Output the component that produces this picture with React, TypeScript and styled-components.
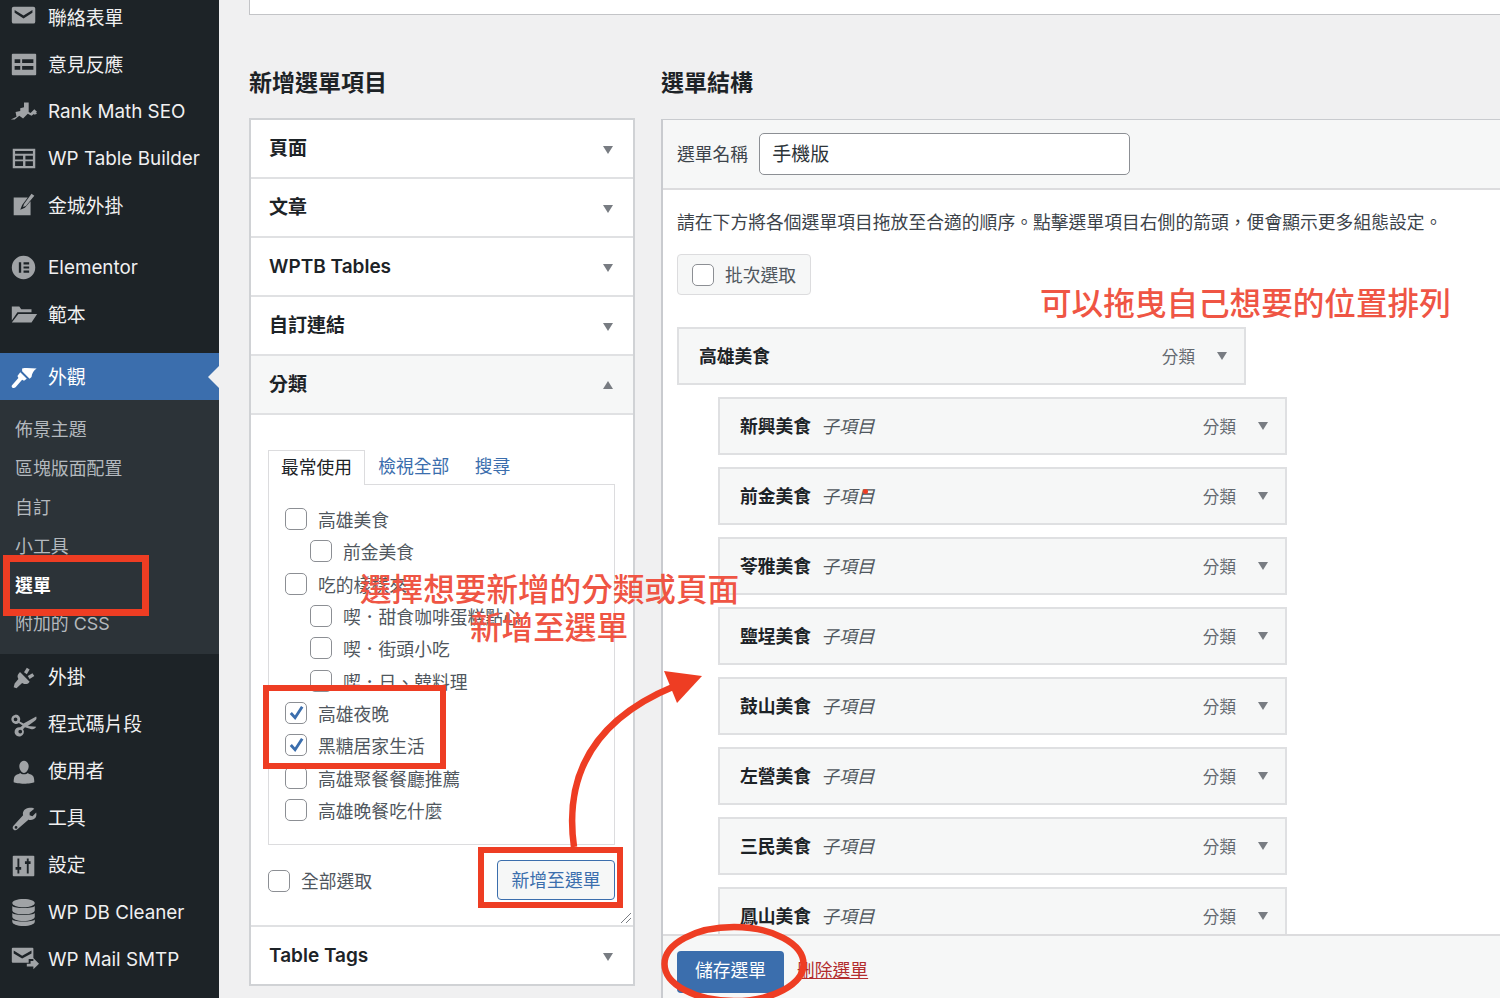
import React from "react";
import styled, { createGlobalStyle } from "styled-components";

const Global = createGlobalStyle`
  html, body { margin: 0; padding: 0; background: #f0f0f1; overflow: hidden; }
  * { box-sizing: border-box; }
`;
const CJK = `"Inter", "Noto Sans CJK TC", sans-serif`;

const Page = styled.div`
  position: relative; display: flex; width: 1500px; height: 998px; overflow: hidden;
  background: #f0f0f1; font-family: ${CJK}; color: #3c434a;
`;
const Lbl = styled.span<{ $lift?: number }>`
  display: block; padding-top: ${p => p.$lift ?? 3}px;
`;
const Sidebar = styled.nav`
  width: 219px; flex: none; height: 998px; background: #1d2327; overflow: hidden;
  display: flex; flex-direction: column;
`;
const MenuTop = styled.div`margin-top: -7px;`;
const Spacer = styled.div<{ $h: number }>`height: ${p => p.$h}px; flex: none;`;
const MenuItem = styled.div<{ $active?: boolean }>`
  position: relative; display: flex; align-items: center; height: 47px; flex: none;
  padding-left: 9px; gap: 9px; font-size: 18.85px; line-height: 24px;
  color: ${p => (p.$active ? "#ffffff" : "#f0f0f1")};
  background: ${p => (p.$active ? "#3b6ead" : "transparent")};
  ${p => p.$active && `&::after { content: ""; position: absolute; right: 0; top: 13px;
    border: 11px solid transparent; border-right-color: #f0f0f1; border-left-width: 0; }`}
`;
const MenuIcon = styled.svg<{ $active?: boolean }>`
  width: 30px; height: 30px; flex: none; fill: ${p => (p.$active ? "#fff" : "#a0a3a6")};
`;
const SubMenu = styled.div`
  background: #2c3338; padding: 9.5px 0 10.5px; flex: none;
`;
const SubItem = styled.div<{ $current?: boolean }>`
  height: 39px; display: flex; align-items: center; padding-left: 15px; font-size: 17.9px; line-height: 22px;
  color: ${p => (p.$current ? "#fff" : "#b4b9be")}; font-weight: ${p => (p.$current ? 700 : 400)};
`;

const Main = styled.main`
  flex: 1; min-width: 0; height: 998px; padding-left: 30px; display: flex; flex-direction: column;
`;
const TopBox = styled.div`
  height: 15px; flex: none; background: #fff; border: 1px solid #c3c4c7; border-top: 0; border-right: 0;
`;
const Columns = styled.div`
  display: flex; gap: 26px; margin-top: 52px; flex: 1; min-height: 0;
`;
const LeftCol = styled.section`width: 386px; flex: none;`;
const RightCol = styled.section`flex: 1; min-width: 0; display: flex; flex-direction: column;`;
const Heading = styled.h2`
  margin: 0 0 20px; height: 32px; line-height: 32px; font-size: 23px; font-weight: 600; color: #1d2327;
`;
const LeftHeading = styled(Heading)`margin-bottom: 19px;`;
const Accordion = styled.div`
  background: #fff; border: 2px solid #d0d2d5; width: 386px;
`;
const AccHead = styled.div<{ $open?: boolean }>`
  height: 59px; display: flex; align-items: center; justify-content: space-between;
  padding: 0 20px 0 18px; font-size: 19px; line-height: 24px; font-weight: 600; color: #1d2327;
  background: ${p => (p.$open ? "#f6f7f7" : "#fff")};
  border-bottom: 2px solid #e0e1e3;
`;
const AccHeadLast = styled(AccHead)`border-bottom: 0; height: 57px;`;
const Arrow = styled.i<{ $up?: boolean }>`
  display: block; width: 0; height: 0; flex: none;
  border-left: 5.5px solid transparent; border-right: 5.5px solid transparent;
  ${p => (p.$up ? "border-bottom: 8px solid #787c82;" : "border-top: 8px solid #787c82;")}
`;
const AccArrow = styled(Arrow)`margin-top: ${p => (p.$up ? 0 : 2)}px;`;
const ItemArrow = styled(Arrow)`margin-bottom: 2px;`;
const AccBody = styled.div`
  position: relative; height: 512px; padding: 35px 18px 0 17px; border-bottom: 2px solid #e0e1e3;
`;
const Tabs = styled.div`display: flex; align-items: flex-end; height: 34px; font-size: 17.8px; line-height: 22px;`;
const TabActive = styled.div`
  height: 35px; padding: 0 12px; display: flex; align-items: center; background: #fff; color: #1d2327;
  border: 1px solid #dcdcde; border-bottom: 0; margin-bottom: -1px; position: relative;
`;
const TabLink = styled.a`
  height: 34px; display: flex; align-items: center; color: #3b6ead; margin-left: 13px; margin-right: 12.5px;
`;
const CheckList = styled.div`
  height: 361px; border: 1px solid #dcdcde; padding: 18px 0 0 16px; font-size: 17.8px; line-height: 22px;
`;
const Row = styled.label<{ $child?: boolean }>`
  display: flex; align-items: center; height: 32.3px; gap: 11px; color: #50575e;
  padding-left: ${p => (p.$child ? 25 : 0)}px; white-space: nowrap;
`;
const Box = styled.span`
  width: 22px; height: 22px; flex: none; display: block; background: #fff; border: 1.5px solid #8c8f94; border-radius: 5px;
  position: relative;
  svg { position: absolute; left: 1px; top: 0; width: 19px; height: 19px; fill: none; stroke: #3b6ead; stroke-width: 3; }
`;
const SelectRow = styled.div`
  display: flex; align-items: center; justify-content: space-between; margin-top: 15px; height: 40px;
`;
const SelectAll = styled.label`
  display: flex; align-items: center; gap: 11px; font-size: 17.8px; line-height: 22px; color: #50575e; margin-top: 1px;
`;
const AddBtn = styled.button`
  width: 118px; height: 40px; font: inherit; font-size: 17.8px; line-height: 22px; color: #3b6ead; background: #f6f7f7;
  border: 1.5px solid #3b6ead; border-radius: 4px; padding: 2px 0 0;
`;
const Resize = styled.svg`
  position: absolute; right: 1px; bottom: 1px; width: 12px; height: 12px; stroke: #787c82; fill: none; stroke-width: 1;
`;

const Panel = styled.div`
  flex: 1; min-height: 0; display: flex; flex-direction: column; background: #fff; border-left: 2px solid #c9cbcf; border-top: 1.5px solid #c9cbcf;
`;
const NameBar = styled.div`
  height: 70px; flex: none; background: #f6f7f7; border-bottom: 2px solid #dcdcde;
  display: flex; align-items: center; padding-left: 14px; gap: 11px; font-size: 17.8px; line-height: 22px;
`;
const NameInput = styled.div`
  width: 371px; height: 42px; background: #fff; border: 1.5px solid #8c8f94; border-radius: 5px;
  display: flex; align-items: center; padding: 2px 0 0 12px; font-size: 19px; color: #2c3338;
`;
const PanelBody = styled.div`
  flex: 1; min-height: 0; overflow: hidden; padding: 19px 0 0 14px;
`;
const Help = styled.p`
  margin: 0; height: 27px; line-height: 27px; font-size: 17.75px; letter-spacing: 0.05px; color: #3c434a; white-space: nowrap;
`;
const BulkBtn = styled.div`
  display: flex; align-items: center; gap: 11px; margin-top: 18px; width: 134px; height: 41px; line-height: 22px;
  background: #f6f7f7; border: 1.5px solid #dcdcde; border-radius: 4px; padding-left: 14px; font-size: 17.8px; color: #50575e;
`;
const ItemList = styled.div`display: flex; flex-direction: column; gap: 12px; margin-top: 32px;`;
const Item = styled.div<{ $child?: boolean }>`
  position: relative; width: 569px; height: 58px; flex: none; margin-left: ${p => (p.$child ? 41 : 0)}px;
  background: #f6f7f7; border: 2px solid #dfe0e2; display: flex; align-items: center;
  padding: 2px 17px 0 20px; font-size: 17.8px; line-height: 22px;
`;
const ItemTitle = styled.strong`font-weight: 600; color: #1d2327;`;
const ItemSub = styled.em`margin-left: 10px; color: #50575e; font-style: italic;`;
const ItemType = styled.span`margin-left: auto; margin-right: 22px; font-size: 16.6px; color: #646970;`;
const Dot = styled.i`
  position: absolute; left: 143px; top: 20px; width: 5px; height: 5px; border-radius: 50%; background: #ee3d23;
`;
const Footer = styled.div`
  height: 64px; flex: none; background: #f6f7f7; border-top: 2px solid #dcdcde;
  display: flex; align-items: center; padding: 9px 0 0 14px; gap: 13px; line-height: 22px;
`;
const SaveBtn = styled.button`
  width: 107px; height: 42px; font: inherit; font-size: 17.8px; color: #fff; background: #3b6ead;
  border: 0; border-radius: 4px; padding: 0 0 2px;
`;
const DeleteLink = styled.a`font-size: 17.8px; color: #b32d2e; text-decoration: underline; margin-top: -2px;`;

const Overlay = styled.svg`position: absolute; inset: 0; width: 1500px; height: 998px; pointer-events: none;`;
const Note = styled.span<{ $x: number; $y: number }>`
  position: absolute; left: ${p => p.$x}px; top: ${p => p.$y}px; font-size: 31.6px; line-height: 40px;
  font-weight: 500; color: #ef5544; white-space: nowrap;
`;

const icons: Record<string, React.ReactNode> = {
  mail: <path fillRule="evenodd" d="M5 4h21a2 2 0 0 1 2 2v14a2 2 0 0 1-2 2H5a2 2 0 0 1-2-2V6a2 2 0 0 1 2-2zm1 3.500v3l9.500 6 9.500-6v-3l-9.500 6z" />,
  form: <path fillRule="evenodd" d="M4 4h24a1 1 0 0 1 1 1v21a1 1 0 0 1-1 1H4a1 1 0 0 1-1-1V5a1 1 0 0 1 1-1zm2 6v4h6v-4zm8 0v4h12v-4zM6 17v4h6v-4zm8 0v4h12v-4z" />,
  rank: <path d="M2 24l6-3-1-5 5-1v-3l4-1V6h5v10l2 1 4-4 3 3-2 1-4 3-4-2-5 5-4-3-5 4zm24-9l4 3-3 1z" />,
  table: <path fillRule="evenodd" d="M4 5h24v21H4zm2.500 2.500v3h19v-3zm0 5v4h8.500v-4zm11 0v4h8v-4zM6.500 18.500v5h8.500v-5zm11 0v5h8v-5z" />,
  edit: <path d="M5 7h15l-6 8-2 5 5-2 6-7v15H5zM24 3l3 2-9 11-3 1 1-3z" />,
  elementor: <path fillRule="evenodd" d="M15.500 3a12.500 12.500 0 1 1 0 25 12.500 12.500 0 0 1 0-25zm-5 7v11h2.500V10zm5 0v2.200h6V10zm0 4.400v2.200h6v-2.200zm0 4.400V21h6v-2.200z" />,
  folder: <path d="M3 7h8l2 3h11v3H9l-6 9zM10 15h20l-6 9H3z" />,
  brush: <path d="M14 7c5-1 10 0 15.500 0-3 2-5 5-5.500 9l-2 2-8-8zM12 11l7 7-3 2-2-1-7 8c-2 2-5 0-4-2l7-8-1-2z" />,
  plugin: <path d="M19 5l3 2-3 5-3-2zM25 11l2 3-5 3-2-3zM12 10l10 10c-2 3-5 3-7 2l-1-.5-6 5.500-3-1 1-4 4-5-.5-1c-1-2 0-4 2-6z" />,
  scissors: <path fillRule="evenodd" d="M7 5a5 5 0 0 1 4.500 7.200l4 2.300L29 7c1 2 0 4-2 5l-7 5 9 1c-1 2-3 3-5 2.500l-7-2-2 2a5 5 0 1 1-3-2l2.500-2-4-2.500A5 5 0 1 1 7 5zm0 3a2 2 0 1 0 0 4 2 2 0 0 0 0-4zm5 13a2 2 0 1 0 0 4 2 2 0 0 0 0-4z" />,
  user: <path d="M16 4c3 0 5 3 5 6s-2 7-5 7-5-4-5-7 2-6 5-6zM5 27c0-5 1-7 3-8 2-1 3-1 4-2 1 2 7 2 8 0 1 1 2 1 4 2s3 3 3 8c-3 2-19 2-22 0z" />,
  wrench: <path d="M27 5l-5 4v3l3 1 4-4c1 4-1 8-6 8-1 0-2 0-2-.5L9 27c-3 3-7-1-4-4l10-11c-1-4 2-8 7-8 2 0 4 0 5 1zM7.500 23.500a1.500 1.500 0 1 0 0 3 1.500 1.500 0 0 0 0-3z" />,
  sliders: <path fillRule="evenodd" d="M5 5h21a1 1 0 0 1 1 1v20a1 1 0 0 1-1 1H5a1 1 0 0 1-1-1V6a1 1 0 0 1 1-1zm4 3v9H7v3h2v4h2v-4h2v-3h-2V8zm10 0v3h-2v3h2v10h2V14h2v-3h-2V8z" />,
  db: <path d="M15.500 1c7 0 12 2 12 4.500S22.500 10 15.500 10s-12-2-12-4.500S8.500 1 15.500 1zM3.500 8.500C6 11.500 25 11.500 27.500 8.500V13c0 2.500-5 4.500-12 4.500S3.500 15.500 3.500 13zM3.500 16c2.500 3 21.500 3 24 0v4c0 2.500-5 4.500-12 4.500s-12-2-12-4.500zM3.500 23c2.500 3 21.500 3 24 0v2.500c0 2.500-5 4.500-12 4.500s-12-2-12-4.500z" />,
  smtp: <path fillRule="evenodd" d="M4 3h21a1 1 0 0 1 1 1v11h-5v4H4a1 1 0 0 1-1-1V4a1 1 0 0 1 1-1zm1 3v3l9 5.500L24 9V6l-10 5.500zM23 17h3v-3l6 6-6 6v-3h-7v-3h4z" />,
};

const Icon = ({ name, active }: { name: string; active?: boolean }) => (
  <MenuIcon viewBox="0 0 32 30" $active={active}>{icons[name]}</MenuIcon>
);
const NavRow = ({ icon, label, active, lift }: { icon: string; label: string; active?: boolean; lift?: number }) => (
  <MenuItem $active={active}><Icon name={icon} active={active} /><Lbl $lift={lift}>{label}</Lbl></MenuItem>
);

const Check = ({ checked }: { checked?: boolean }) => (
  <Box>{checked && <svg viewBox="0 0 20 20"><path d="M4 10.500l4.500 5L16 4" /></svg>}</Box>
);

const cats: [string, boolean?, boolean?][] = [
  ["高雄美食"], ["前金美食", true], ["吃的樣樣來"], ["喫．甜食咖啡蛋糕點心", true], ["喫．街頭小吃", true], ["喫．日、韓料理", true],
  ["高雄夜晚", false, true], ["黑糖居家生活", false, true], ["高雄聚餐餐廳推薦"], ["高雄晚餐吃什麼"],
];
const children = ["新興美食", "前金美食", "苓雅美食", "鹽埕美食", "鼓山美食", "左營美食", "三民美食", "鳳山美食"];

export default function App() {
  return (
    <Page>
      <Global />
      <Sidebar>
        <MenuTop />
        <NavRow icon="mail" label="聯絡表單" lift={5} />
        <NavRow icon="form" label="意見反應" lift={5} />
        <NavRow icon="rank" label="Rank Math SEO" />
        <NavRow icon="table" label="WP Table Builder" />
        <NavRow icon="edit" label="金城外掛" lift={5} />
        <Spacer $h={15} />
        <NavRow icon="elementor" label="Elementor" />
        <NavRow icon="folder" label="範本" lift={5} />
        <Spacer $h={15.5} />
        <NavRow icon="brush" label="外觀" active />
        <SubMenu>
          <SubItem><Lbl>佈景主題</Lbl></SubItem>
          <SubItem><Lbl>區塊版面配置</Lbl></SubItem>
          <SubItem><Lbl>自訂</Lbl></SubItem>
          <SubItem><Lbl>小工具</Lbl></SubItem>
          <SubItem $current><Lbl>選單</Lbl></SubItem>
          <SubItem><Lbl $lift={1}>附加的 CSS</Lbl></SubItem>
        </SubMenu>
        <NavRow icon="plugin" label="外掛" lift={2} />
        <NavRow icon="scissors" label="程式碼片段" lift={1} />
        <NavRow icon="user" label="使用者" lift={1} />
        <NavRow icon="wrench" label="工具" lift={1} />
        <NavRow icon="sliders" label="設定" lift={1} />
        <NavRow icon="db" label="WP DB Cleaner" lift={1} />
        <NavRow icon="smtp" label="WP Mail SMTP" lift={1} />
      </Sidebar>
      <Main>
        <TopBox />
        <Columns>
          <LeftCol>
            <LeftHeading>新增選單項目</LeftHeading>
            <Accordion>
              <AccHead>頁面<AccArrow /></AccHead>
              <AccHead>文章<AccArrow /></AccHead>
              <AccHead>WPTB Tables<AccArrow /></AccHead>
              <AccHead>自訂連結<AccArrow /></AccHead>
              <AccHead $open>分類<AccArrow $up /></AccHead>
              <AccBody>
                <Tabs>
                  <TabActive>最常使用</TabActive>
                  <TabLink>檢視全部</TabLink>
                  <TabLink>搜尋</TabLink>
                </Tabs>
                <CheckList>
                  {cats.map(([t, child, checked]) => (
                    <Row key={t} $child={child}><Check checked={checked} /><Lbl $lift={4}>{t}</Lbl></Row>
                  ))}
                </CheckList>
                <SelectRow>
                  <SelectAll><Check /><Lbl $lift={2}>全部選取</Lbl></SelectAll>
                  <AddBtn>新增至選單</AddBtn>
                </SelectRow>
                <Resize viewBox="0 0 12 12"><path d="M1 11L11 1M6 11l5-5" /></Resize>
              </AccBody>
              <AccHeadLast>Table Tags<AccArrow /></AccHeadLast>
            </Accordion>
          </LeftCol>
          <RightCol>
            <Heading>選單結構</Heading>
            <Panel>
              <NameBar><Lbl $lift={2}>選單名稱</Lbl><NameInput>手機版</NameInput></NameBar>
              <PanelBody>
                <Help>請在下方將各個選單項目拖放至合適的順序。點擊選單項目右側的箭頭，便會顯示更多組態設定。</Help>
                <BulkBtn><Check /><Lbl $lift={2}>批次選取</Lbl></BulkBtn>
                <ItemList>
                  <Item><ItemTitle>高雄美食</ItemTitle><ItemType>分類</ItemType><ItemArrow /></Item>
                  {children.map((c, i) => (
                    <Item key={c} $child>
                      <ItemTitle>{c}</ItemTitle><ItemSub>子項目</ItemSub>
                      {i === 1 && <Dot />}
                      <ItemType>分類</ItemType><ItemArrow />
                    </Item>
                  ))}
                </ItemList>
              </PanelBody>
              <Footer>
                <SaveBtn>儲存選單</SaveBtn>
                <DeleteLink>刪除選單</DeleteLink>
              </Footer>
            </Panel>
          </RightCol>
        </Columns>
      </Main>
      <Note $x={360} $y={570}>選擇想要新增的分類或頁面</Note>
      <Note $x={470} $y={608}>新增至選單</Note>
      <Note $x={1040} $y={284}>可以拖曳自己想要的位置排列</Note>
      <Overlay viewBox="0 0 1500 998">
        <g fill="none" stroke="#ee3d23">
          <rect x="6.500" y="558.500" width="139" height="54" strokeWidth="7" />
          <rect x="266" y="688" width="177" height="78" strokeWidth="6" />
          <rect x="481" y="850" width="139" height="55" strokeWidth="6" />
          <ellipse cx="734" cy="964" rx="69.500" ry="37" strokeWidth="6.500" />
          <path d="M574 847C566 790 580 725 675 686" strokeWidth="6.500" />
        </g>
        <path d="M664 671L702 676L677 703Z" fill="#ee3d23" />
      </Overlay>
    </Page>
  );
}
